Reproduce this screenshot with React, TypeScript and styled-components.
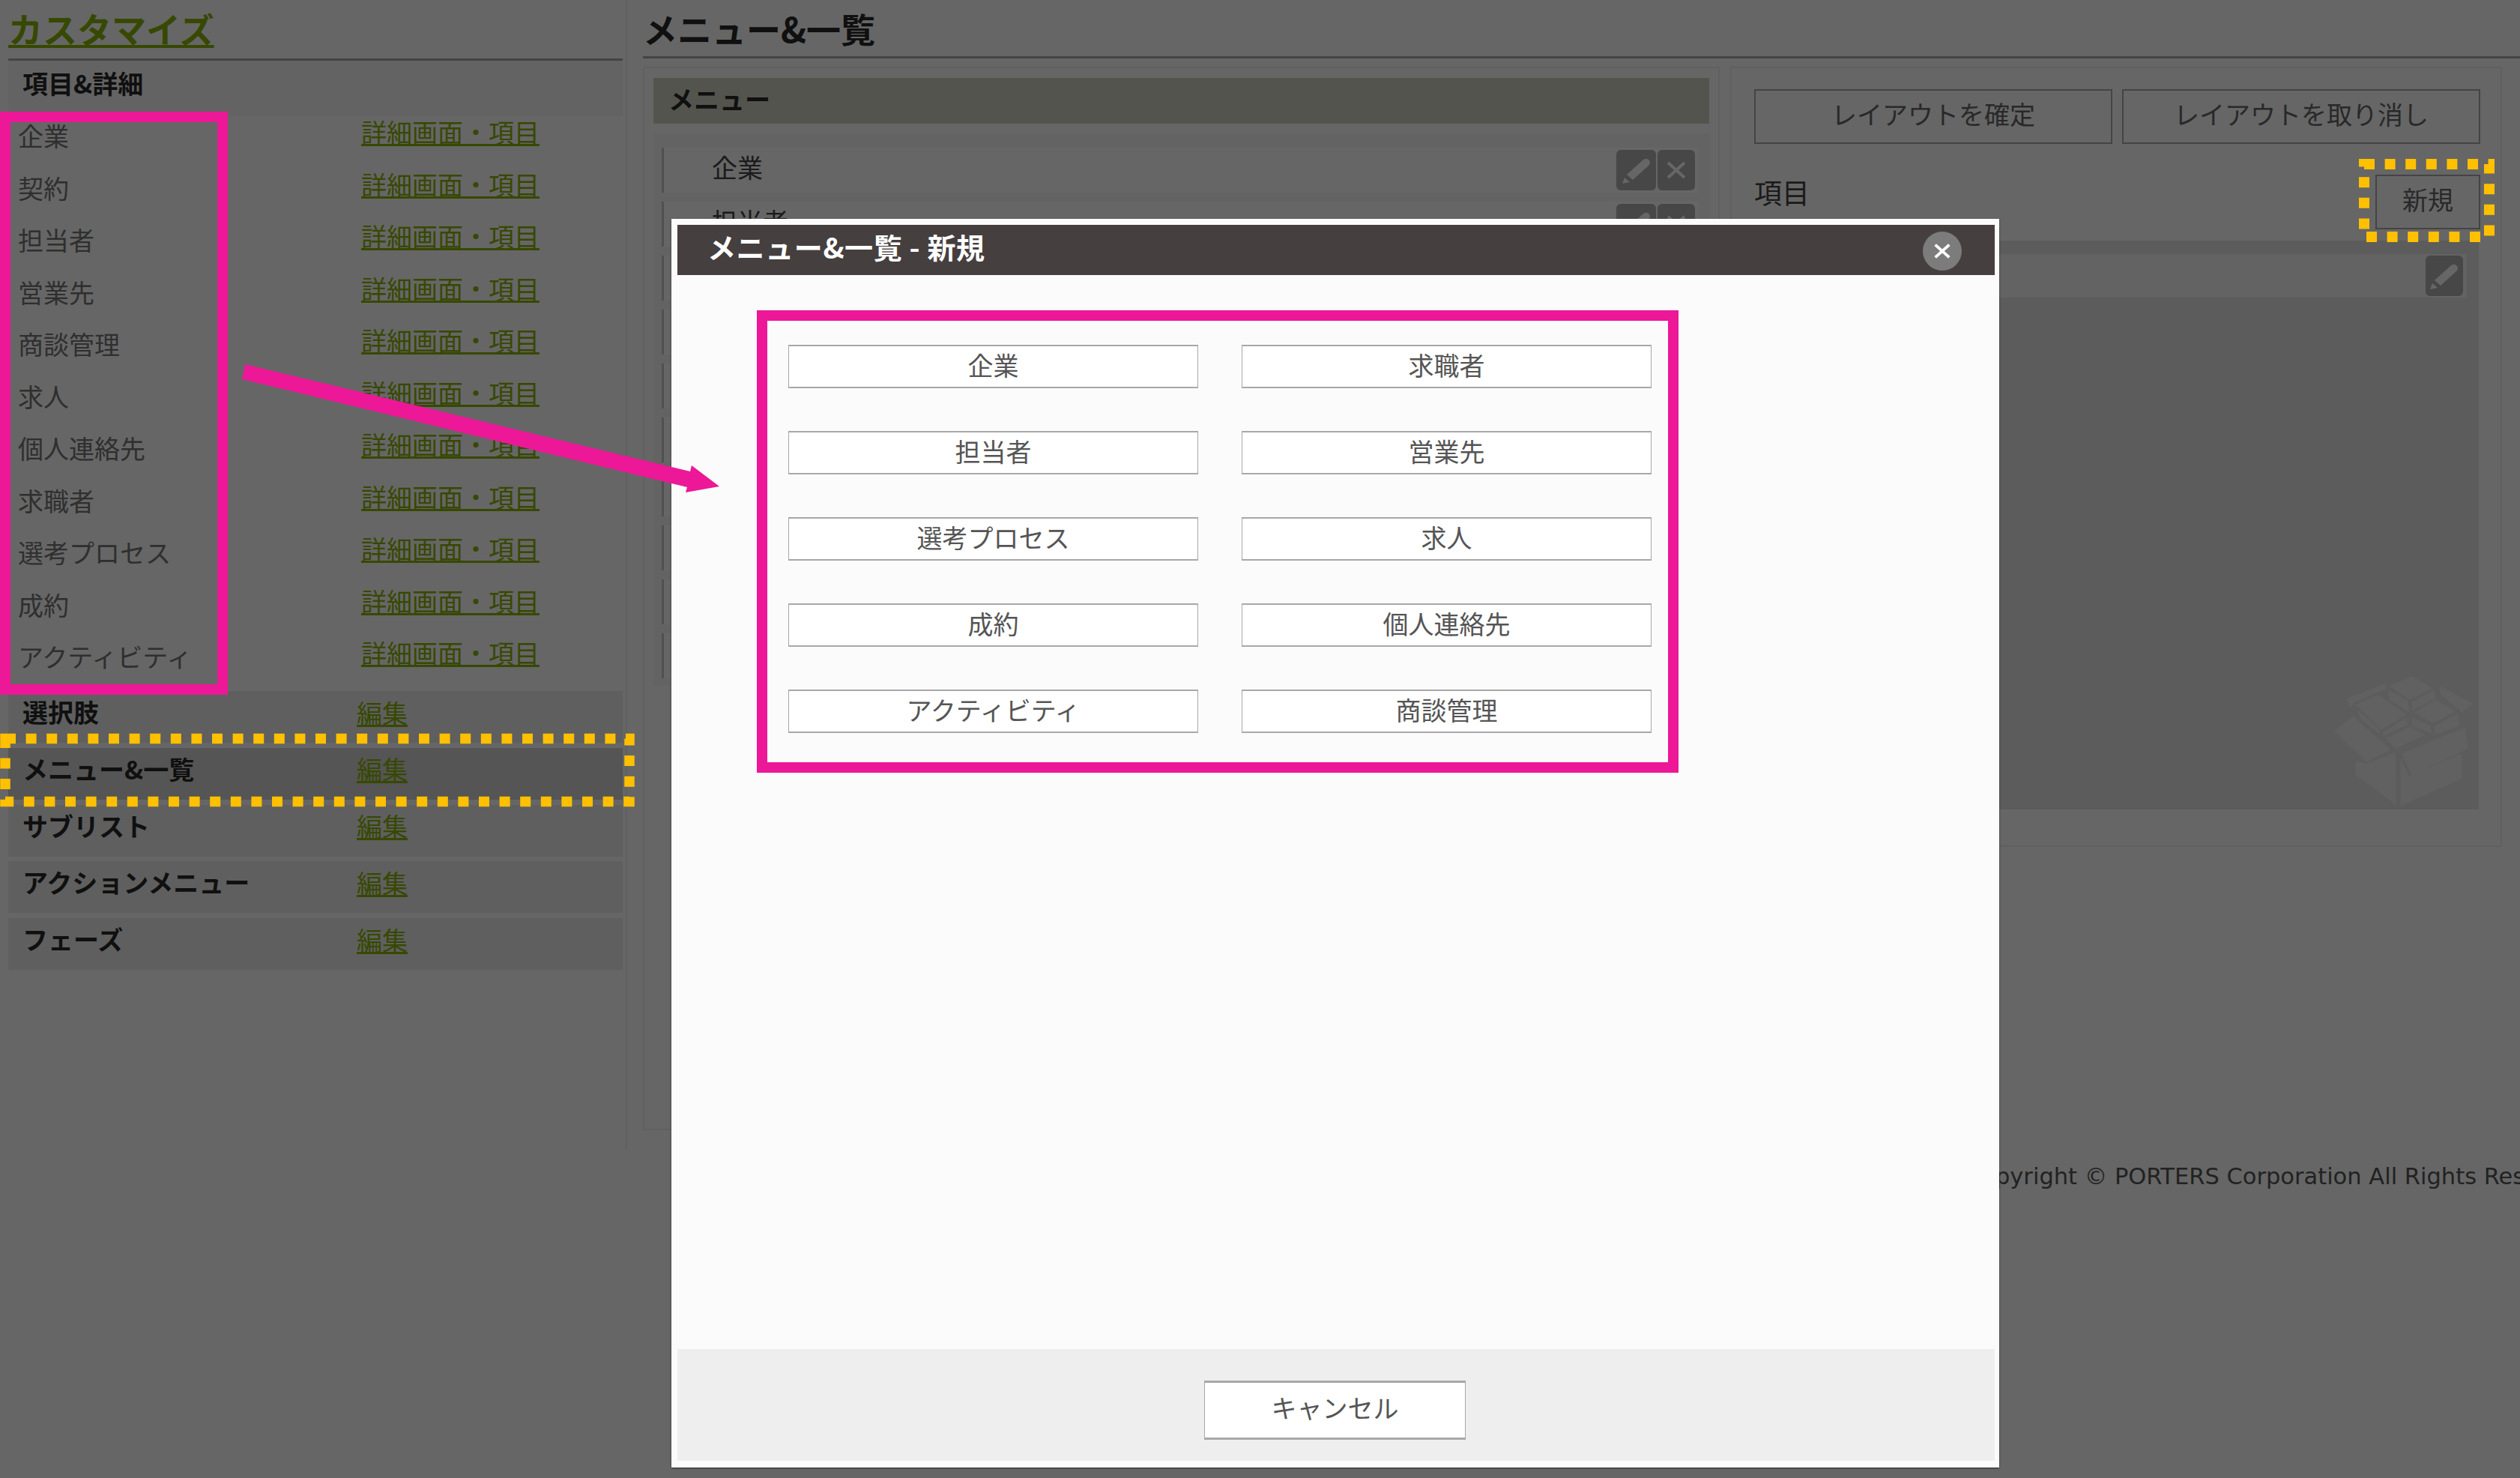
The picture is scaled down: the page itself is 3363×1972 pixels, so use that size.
import { FC } from 'react';
import styled, { createGlobalStyle } from 'styled-components';

const GlobalStyle = createGlobalStyle`
  html, body {
    margin: 0;
    padding: 0;
    background: #fff;
    font-family: "Noto Sans CJK JP", "Noto Sans", sans-serif;
  }
`;

const Page = styled.div`
  position: relative;
  display: flex;
  align-items: flex-start;
  width: 3363px;
  height: 1972px;
  overflow: hidden;
  background: #fff;
  color: #777;
  font-size: 34px;
`;

/* ---------- sidebar ---------- */
const Sidebar = styled.aside`
  box-sizing: border-box;
  flex: none;
  width: 837px;
  height: 1534px;
  padding: 0 4px 0 11px;
  border-right: 2px solid #f0f0f0;
`;

const SideTitle = styled.h1`
  box-sizing: border-box;
  height: 81px;
  margin: 0;
  padding-top: 10px;
  border-bottom: 3px solid #aaa;
  font-size: 46px;
  font-weight: 700;
  line-height: 54px;
`;

const GreenLink = styled.a`
  color: #8ab400;
  text-decoration: underline;
  white-space: nowrap;
`;

const SectionHead = styled.div`
  box-sizing: border-box;
  height: 74px;
  padding: 7px 0 0 19px;
  background: #f8f8f8;
  color: #2a2a2a;
  font-weight: 700;
  line-height: 46px;
`;

const ItemList = styled.div`
  height: 767px;
`;

const ItemRow = styled.div`
  display: flex;
  align-items: flex-start;
  height: 69.5px;
  padding-left: 13px;
`;

const ItemName = styled.span`
  width: 458px;
  line-height: 52px;
`;

const ItemLink = styled(GreenLink)`
  line-height: 42px;
`;

const GroupList = styled.div`
  display: flex;
  flex-direction: column;
  gap: 6.8px;
`;

const GroupRow = styled.div<{ $active?: boolean }>`
  box-sizing: border-box;
  display: flex;
  align-items: center;
  height: 69px;
  padding: 0 0 13px 19px;
  background: ${(p) => (p.$active ? '#d5d5d5' : '#eeeeee')};
`;

const GroupName = styled.span`
  width: 446px;
  color: #2a2a2a;
  font-weight: 700;
  line-height: 46px;
`;

/* ---------- main ---------- */
const Main = styled.main`
  flex: 1;
  min-width: 0;
  padding-left: 21px;
`;

const MainTitle = styled.h2`
  box-sizing: border-box;
  height: 78px;
  margin: 0;
  padding-top: 10px;
  border-bottom: 3px solid #aaa;
  color: #2a2a2a;
  font-size: 46px;
  font-weight: 700;
  line-height: 54px;
`;

const Panels = styled.div`
  display: flex;
  align-items: flex-start;
  gap: 14px;
  margin-top: 11px;
`;

const MenuPanel = styled.section`
  box-sizing: border-box;
  width: 1437px;
  height: 1419px;
  padding: 13px 12px;
  border: 2px solid #f0f0f0;
`;

const MenuHead = styled.div`
  box-sizing: border-box;
  height: 61px;
  padding-left: 20px;
  background: #d2d2c4;
  color: #2a2a2a;
  font-weight: 700;
  line-height: 56px;
`;

const MenuList = styled.div`
  box-sizing: border-box;
  display: flex;
  flex-direction: column;
  gap: 12px;
  height: 737px;
  margin-top: 13px;
  padding: 19px 14px 0 11px;
  background: #f7f7f7;
`;

const MenuRow = styled.div`
  box-sizing: border-box;
  display: flex;
  align-items: center;
  justify-content: space-between;
  height: 60px;
  padding: 0 5px 0 64px;
  border-left: 3px solid #c8c8c8;
  background: #fff;
  color: #444;
`;

const MenuName = styled.span`
  margin-bottom: 8px;
  line-height: 46px;
`;

const RowTools = styled.div`
  display: flex;
  gap: 2px;
`;

const ToolButton = styled.span<{ $wide?: boolean }>`
  display: flex;
  align-items: center;
  justify-content: center;
  width: ${(p) => (p.$wide ? 53 : 50)}px;
  height: 54px;
  border-radius: 6px;
  background: #b2b2b2;
`;

const ItemsPanel = styled.section`
  box-sizing: border-box;
  width: 1030px;
  height: 1041px;
  padding: 28px 27px 0 30px;
  border: 2px solid #f0f0f0;
`;

const LayoutButtons = styled.div`
  display: flex;
  gap: 13px;
`;

const OutlineButton = styled.span`
  box-sizing: border-box;
  display: flex;
  align-items: center;
  justify-content: center;
  flex: 1;
  height: 73px;
  padding-bottom: 8px;
  border: 2px solid #aaa;
  color: #666;
`;

const ItemsHead = styled.div`
  display: flex;
  align-items: flex-start;
  justify-content: space-between;
  margin-top: 41px;
`;

const ItemsLabel = styled.span`
  color: #444;
  font-size: 37px;
  line-height: 46px;
`;

const NewButton = styled(OutlineButton)`
  flex: none;
  width: 140px;
`;

const ItemsBody = styled.div`
  box-sizing: border-box;
  display: flex;
  flex-direction: column;
  height: 759px;
  margin: 15px 2px 0 0;
  padding-top: 18px;
  background: #e6e6e6;
`;

const ItemsRow = styled.div`
  box-sizing: border-box;
  display: flex;
  align-items: center;
  justify-content: flex-end;
  height: 58px;
  margin-right: 16px;
  padding-right: 5px;
  background: #f8f8f8;
`;

const BoxMark = styled.svg`
  align-self: flex-end;
  margin: auto 1px 3px 0;
  fill: #f2f2f2;
`;

const Copyright = styled.div`
  margin-top: 40px;
  padding-left: 1765px;
  color: #555;
  font-family: "DejaVu Sans", sans-serif;
  font-size: 30.5px;
  line-height: 44px;
  white-space: nowrap;
`;

/* ---------- dialog ---------- */
const Backdrop = styled.div`
  position: absolute;
  inset: 0;
  background: rgba(0, 0, 0, 0.6);
`;

const Dialog = styled.div`
  box-sizing: border-box;
  position: absolute;
  left: 896px;
  top: 292px;
  display: flex;
  flex-direction: column;
  width: 1772px;
  height: 1666px;
  padding: 7px 6px 9px 8px;
  background: #fbfbfb;
  border-top: 1px solid #fff;
  box-shadow: 0 1px 2px rgba(0, 0, 0, 0.6);
  color: #555;
`;

const DialogHead = styled.div`
  display: flex;
  align-items: center;
  justify-content: space-between;
  flex: none;
  height: 67px;
  padding: 0 44px 0 40px;
  background: #453f3f;
  color: #fff;
  font-size: 38px;
  font-weight: 700;
`;

const DialogTitle = styled.span`
  margin-bottom: 10px;
  letter-spacing: 0.6px;
  line-height: 50px;
`;

const CloseCircle = styled.span`
  display: flex;
  align-items: center;
  justify-content: center;
  width: 52px;
  height: 52px;
  margin-top: 2px;
  border-radius: 50%;
  background: #7c7c7c;
`;

const DialogBody = styled.div`
  display: grid;
  flex: 1;
  grid-template-columns: 547px 547px;
  grid-auto-rows: 58px;
  align-content: start;
  column-gap: 58px;
  row-gap: 57px;
  padding: 93px 0 0 148px;
`;

const ChoiceButton = styled.span`
  box-sizing: border-box;
  display: flex;
  align-items: center;
  justify-content: center;
  padding-bottom: 6px;
  border: 1px solid #a8a8a8;
  border-width: 2px 1px;
  background: #fff;
`;

const DialogFoot = styled.div`
  display: flex;
  align-items: flex-start;
  justify-content: center;
  flex: none;
  height: 149px;
  padding-top: 42px;
  box-sizing: border-box;
  background: #eee;
`;

const CancelButton = styled(ChoiceButton)`
  width: 349px;
  height: 79px;
  margin-right: 3px;
  padding-bottom: 8px;
  border-width: 3px 1px;
`;

/* ---------- annotations ---------- */
const PinkFrame = styled.div<{ $x: number; $y: number; $w: number; $h: number }>`
  box-sizing: border-box;
  position: absolute;
  left: ${(p) => p.$x}px;
  top: ${(p) => p.$y}px;
  width: ${(p) => p.$w}px;
  height: ${(p) => p.$h}px;
  border: 14px solid #ec1897;
`;

const Overlay = styled.svg`
  position: absolute;
  inset: 0;
  pointer-events: none;
`;

const YELLOW = '#ffc000';
const PINK = '#ec1897';

const detailItems = ['企業', '契約', '担当者', '営業先', '商談管理', '求人', '個人連絡先', '求職者', '選考プロセス', '成約', 'アクティビティ'];
const groups = ['選択肢', 'メニュー&一覧', 'サブリスト', 'アクションメニュー', 'フェーズ'];
const menuRows = ['企業', '担当者', '', '', '', '', '', '', '', ''];
const choices = ['企業', '求職者', '担当者', '営業先', '選考プロセス', '求人', '成約', '個人連絡先', 'アクティビティ', '商談管理'];

const boxShapes = [
  '45,255 120,195 270,330 175,380',
  '130,375 175,385 290,340 293,550 130,430',
  '315,345 570,240 580,325 355,435',
  '310,365 345,437 555,345 555,445 310,555',
  '95,125 250,65 255,85 125,140 110,165',
  '265,75 355,35 440,85 345,130',
  '262,90 340,135 345,180 265,130',
  '355,140 445,90 450,125 355,175',
  '130,150 220,110 335,190 235,250',
  '135,170 225,245 228,270 150,205',
  '240,260 335,200 340,230 240,275',
  '365,180 450,130 530,175 440,225',
  '355,200 430,235 435,265 355,235',
  '445,235 540,185 545,235 445,270',
  '250,285 345,240 410,270 290,325',
  '465,75 600,145 555,180 470,110',
];

const PencilIcon: FC = () => (
  <svg width="42" height="38" viewBox="0 0 42 38" fill="#fff">
    <path d="M8 25 L29 6 Q33 2 37 5 Q41 9 37 13 L16 32 Z" />
    <path d="M5 29 L12 35 L2 37 Z" />
  </svg>
);

const CrossIcon: FC<{ size?: number; color?: string; weight?: number }> = ({ size = 26, color = '#fff', weight = 4 }) => (
  <svg width={size} height={size} viewBox="0 0 26 26" stroke={color} strokeWidth={weight}>
    <path d="M2 3 L24 23 M24 3 L2 23" />
  </svg>
);

const App: FC = () => (
  <Page>
    <GlobalStyle />
    <Sidebar>
      <SideTitle>
        <GreenLink>カスタマイズ</GreenLink>
      </SideTitle>
      <SectionHead>項目&amp;詳細</SectionHead>
      <ItemList>
        {detailItems.map((name) => (
          <ItemRow key={name}>
            <ItemName>{name}</ItemName>
            <ItemLink>詳細画面・項目</ItemLink>
          </ItemRow>
        ))}
      </ItemList>
      <GroupList>
        {groups.map((name) => (
          <GroupRow key={name} $active={name === 'メニュー&一覧'}>
            <GroupName>{name}</GroupName>
            <GreenLink>編集</GreenLink>
          </GroupRow>
        ))}
      </GroupList>
    </Sidebar>

    <Main>
      <MainTitle>メニュー&amp;一覧</MainTitle>
      <Panels>
        <MenuPanel>
          <MenuHead>メニュー</MenuHead>
          <MenuList>
            {menuRows.map((name, i) => (
              <MenuRow key={i}>
                <MenuName>{name}</MenuName>
                <RowTools>
                  <ToolButton $wide>
                    <PencilIcon />
                  </ToolButton>
                  <ToolButton>
                    <CrossIcon />
                  </ToolButton>
                </RowTools>
              </MenuRow>
            ))}
          </MenuList>
        </MenuPanel>
        <ItemsPanel>
          <LayoutButtons>
            <OutlineButton>レイアウトを確定</OutlineButton>
            <OutlineButton>レイアウトを取り消し</OutlineButton>
          </LayoutButtons>
          <ItemsHead>
            <ItemsLabel>項目</ItemsLabel>
            <NewButton>新規</NewButton>
          </ItemsHead>
          <ItemsBody>
            <ItemsRow>
              <ToolButton>
                <PencilIcon />
              </ToolButton>
            </ItemsRow>
            <BoxMark width="197" height="180" viewBox="30 20 590 540">
              {boxShapes.map((points) => (
                <polygon key={points} points={points} />
              ))}
            </BoxMark>
          </ItemsBody>
        </ItemsPanel>
      </Panels>
      <Copyright>Copyright © PORTERS Corporation All Rights Reserved.</Copyright>
    </Main>

    <Backdrop />

    <Dialog>
      <DialogHead>
        <DialogTitle>メニュー&amp;一覧 - 新規</DialogTitle>
        <CloseCircle>
          <CrossIcon size={22} weight={4.5} />
        </CloseCircle>
      </DialogHead>
      <DialogBody>
        {choices.map((name) => (
          <ChoiceButton key={name}>{name}</ChoiceButton>
        ))}
      </DialogBody>
      <DialogFoot>
        <CancelButton>キャンセル</CancelButton>
      </DialogFoot>
    </Dialog>

    <PinkFrame $x={0} $y={149} $w={304} $h={778} />
    <PinkFrame $x={1010} $y={414} $w={1230} $h={617} />

    <Overlay width="3363" height="1972">
      <rect x="7" y="985.5" width="833" height="84" fill="none" stroke={YELLOW} strokeWidth="13.5" strokeDasharray="14 13.6" />
      <rect x="3155" y="219" width="167" height="97" fill="none" stroke={YELLOW} strokeWidth="14" strokeDasharray="14 13.6" />
      <polygon fill={PINK} points="327,486 921,629 923,621 960,649 915,657 917,650 323,506" />
    </Overlay>
  </Page>
);

export default App;
